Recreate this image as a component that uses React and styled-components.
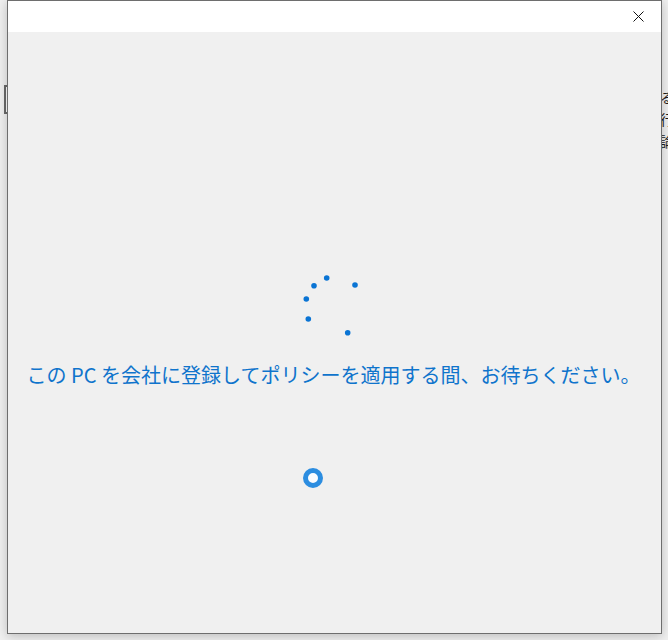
import styled, { createGlobalStyle } from "styled-components";

const GlobalStyle = createGlobalStyle`
  html, body {
    margin: 0;
    padding: 0;
    background: #f0f0f0;
    overflow: hidden;
  }
`;

const Page = styled.div`
  position: relative;
  width: 668px;
  height: 640px;
  overflow: hidden;
  background: #f0f0f0;
  font-family: "Noto Sans CJK JP", "Noto Sans", sans-serif;
`;

/* what peeks out behind the dialog */
const BackField = styled.div`
  position: absolute;
  left: 4px;
  top: 85px;
  width: 200px;
  height: 29px;
  border: 2px solid #6a6a6a;
  box-sizing: border-box;
  background: #fff;
`;

const BackText = styled.div`
  position: absolute;
  left: 660px;
  top: 86px;
  font-size: 14px;
  line-height: 22px;
  color: #1b1b1b;
  white-space: nowrap;
`;

const Dialog = styled.div`
  position: absolute;
  left: 7px;
  top: 0;
  width: 655px;
  height: 634px;
  box-sizing: border-box;
  border: 1px solid #6e6e6e;
  background: #f0f0f0;
  display: flex;
  flex-direction: column;
  box-shadow: 0 2px 10px rgba(0, 0, 0, 0.22);
`;

const TitleBar = styled.div`
  height: 31px;
  background: #fff;
  display: flex;
  justify-content: flex-end;
  flex-shrink: 0;
`;

const CloseButton = styled.button`
  width: 46px;
  height: 31px;
  border: none;
  background: transparent;
  padding: 0;
  display: flex;
  align-items: center;
  justify-content: center;
  cursor: pointer;
`;

const Content = styled.div`
  flex: 1;
  display: flex;
  flex-direction: column;
  align-items: center;
  padding-top: 242px;
`;

const Spinner = styled.svg`
  display: block;
  margin-left: -8px;
`;

const Message = styled.div`
  margin-top: 23px;
  font-size: 20px;
  line-height: 28px;
  color: #0f74cc;
  white-space: nowrap;
  margin-left: -2px;
`;

const Ring = styled.div`
  margin-top: 79px;
  margin-left: -44px;
  width: 20px;
  height: 20px;
  box-sizing: border-box;
  border-radius: 50%;
  border: 5px solid #2c8de0;
  background: #fafcff;
`;

const dots = [
  [27.7, 4],
  [15, 11.7],
  [7.3, 25],
  [9.3, 45],
  [48.7, 58.7],
  [56, 11],
];

export default function App() {
  return (
    <Page>
      <GlobalStyle />
      <BackField />
      <BackText>
        る<br />
        行<br />
        論
      </BackText>
      <Dialog>
        <TitleBar>
          <CloseButton aria-label="閉じる">
            <svg width="11" height="11" viewBox="0 0 11 11">
              <path d="M0.5 0.5 L10.5 10.5 M10.5 0.5 L0.5 10.5" stroke="#111" strokeWidth="1" />
            </svg>
          </CloseButton>
        </TitleBar>
        <Content>
          <Spinner width="64" height="64" viewBox="0 0 64 64">
            {dots.map(([x, y], i) => (
              <circle key={i} cx={x} cy={y} r="2.8" fill="#0a74d4" />
            ))}
          </Spinner>
          <Message>この PC を会社に登録してポリシーを適用する間、お待ちください。</Message>
          <Ring />
        </Content>
      </Dialog>
    </Page>
  );
}
